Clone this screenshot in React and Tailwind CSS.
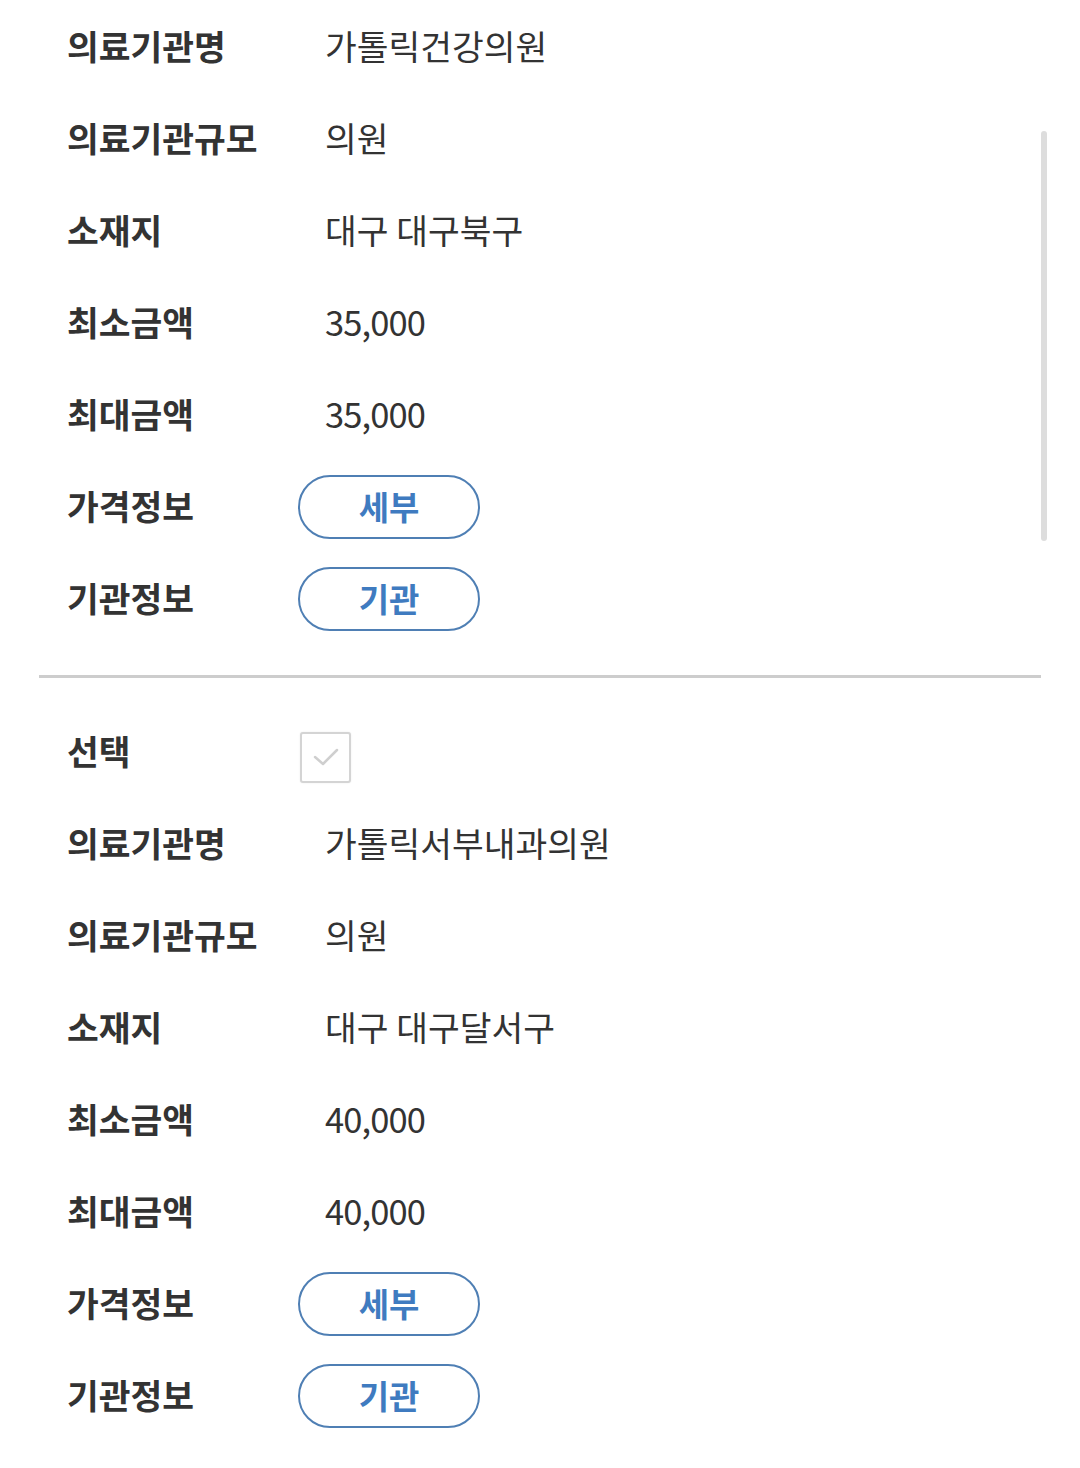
import React from "react";

const font = { fontFamily: '"Noto Sans CJK KR", "Noto Sans", sans-serif' };

function Row({ label, children }) {
  return (
    <div className="flex h-[92px] items-center">
      <div className="w-[231px] shrink-0 text-[34.5px] font-bold text-[#333333] leading-none">
        {label}
      </div>
      <div className="flex items-center">{children}</div>
    </div>
  );
}

function Val({ children, num }) {
  return (
    <div className={num ? "pl-[27px] text-[34.5px] font-normal text-[#333333] leading-none tracking-[-0.9px]" : "pl-[27px] text-[34.5px] font-normal text-[#333333] leading-none"}>
      {children}
    </div>
  );
}

function Btn({ children }) {
  return (
    <button className="mt-[3px] flex h-[64px] w-[182px] items-center justify-center rounded-full border-2 border-[#4f7fb4] bg-white text-[33px] font-bold text-[#3f7bc0] leading-none">
      {children}
    </button>
  );
}

function Section({ item, withSelect }) {
  return (
    <div className="flex flex-col">
      {withSelect && (
        <Row label="선택">
          <div className="ml-[2px] mt-[14px] flex h-[51px] w-[51px] items-center justify-center rounded-[3px] border-2 border-[#d4d4d4] bg-white shadow-[0_0_2px_rgba(0,0,0,0.08)]">
            <svg width="30" height="24" viewBox="0 0 30 24" fill="none">
              <path d="M4 12 L12 19 L26 5" stroke="#cfcfcf" strokeWidth="2.5" strokeLinecap="round" strokeLinejoin="round" />
            </svg>
          </div>
        </Row>
      )}
      <Row label="의료기관명"><Val>{item.name}</Val></Row>
      <Row label="의료기관규모"><Val>의원</Val></Row>
      <Row label="소재지"><Val>{item.loc}</Val></Row>
      <Row label="최소금액"><Val num>{item.min}</Val></Row>
      <Row label="최대금액"><Val num>{item.max}</Val></Row>
      <Row label="가격정보"><Btn>세부</Btn></Row>
      <Row label="기관정보"><Btn>기관</Btn></Row>
    </div>
  );
}

export default function App() {
  return (
    <div style={font} className="relative h-[1468px] w-[1080px] overflow-hidden bg-white">
      <div className="pl-[67px] -mt-[1px]">
        <Section item={{ name: "가톨릭건강의원", loc: "대구 대구북구", min: "35,000", max: "35,000" }} />
      </div>
      <div className="ml-[39px] mt-[32px] h-[3px] w-[1002px] bg-[#cdcdcd]" />
      <div className="pl-[67px] mt-[26px]">
        <Section withSelect item={{ name: "가톨릭서부내과의원", loc: "대구 대구달서구", min: "40,000", max: "40,000" }} />
      </div>
      <div className="absolute left-[1041px] top-[131px] h-[410px] w-[6px] rounded-full bg-[#dddddd]" />
    </div>
  );
}
